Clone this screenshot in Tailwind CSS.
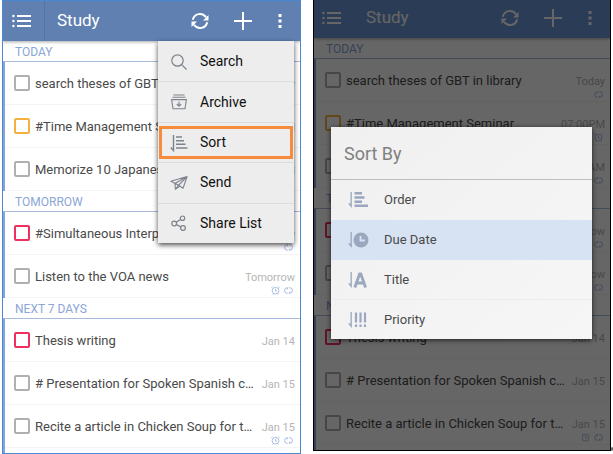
<!DOCTYPE html>
<html lang="en">
<head>
<meta charset="utf-8">
<title>Study</title>
<script src="https://cdn.jsdelivr.net/npm/@tailwindcss/browser@4"></script>
</head>
<body class="bg-white font-['Roboto',sans-serif] text-[#4a4a4a]">
<svg class="hidden" aria-hidden="true">
  <symbol id="i-list" viewBox="0 0 20 14"><g fill="currentColor"><circle cx="1.4" cy="2" r="1.2"/><circle cx="1.4" cy="7" r="1.2"/><circle cx="1.4" cy="12" r="1.2"/><rect x="5" y="1" width="14" height="2"/><rect x="5" y="6" width="14" height="2"/><rect x="5" y="11" width="14" height="2"/></g></symbol>
  <symbol id="i-sync" viewBox="0 0 18 18"><g fill="none" stroke="currentColor" stroke-width="2"><path d="M1.800 7.800A7.300 7.300 0 0 1 15 5.200"/><path d="M16.200 10.200A7.300 7.300 0 0 1 3 12.800"/></g><path fill="currentColor" d="M17.500 3v5.500H12zM.5 15V9.500H6z"/></symbol>
  <symbol id="i-plus" viewBox="0 0 18 18"><path d="M9 0v18M0 9h18" stroke="currentColor" stroke-width="2"/></symbol>
  <symbol id="i-dots" viewBox="0 0 4 16"><path fill="currentColor" d="M.5 1h3v3h-3zM.5 6.500h3v3h-3zM.5 12h3v3h-3z"/></symbol>
  <symbol id="i-search" viewBox="0 0 16 16"><g fill="none" stroke="currentColor" stroke-width="1.200"><circle cx="6.500" cy="6.500" r="5.700"/><path d="M10.700 10.700l4.800 4.800"/></g></symbol>
  <symbol id="i-archive" viewBox="0 0 16 16"><g fill="none" stroke="currentColor" stroke-width="1.100"><path d="M2.500 1h11M1.500 3.300h13M.6 5.600h14.800l-1.400 9.200H2zM8 7.500v4.500M5.800 10L8 12.300 10.200 10"/></g></symbol>
  <symbol id="i-sort" viewBox="0 0 18 18"><g fill="none" stroke="currentColor" stroke-width="1.400"><path d="M3.500 1v15.500L.8 13.500"/><path d="M6 3h6M6 6.700h8M6 10.300h9.500M6 14h11.500"/></g></symbol>
  <symbol id="i-send" viewBox="0 0 20 16"><g fill="none" stroke="currentColor" stroke-width="1.200" stroke-linejoin="round"><path d="M1 6L19 .8l-4.500 13-5-3.300zM19 .8L5.500 8.500 6 15 9.500 10.500zM6 15l5-3.500"/></g></symbol>
  <symbol id="i-share" viewBox="0 0 16 16"><g fill="none" stroke="currentColor" stroke-width="1.200"><circle cx="3.200" cy="8.500" r="2.400"/><circle cx="11.500" cy="3.200" r="2.200"/><circle cx="12" cy="13" r="2.400"/><path d="M5.200 7.200l4.400-2.800M5.400 9.500l4.400 2.400"/></g></symbol>
  <symbol id="i-alarm" viewBox="0 0 8 8"><g fill="none" stroke="currentColor" stroke-width=".8"><circle cx="4" cy="4.200" r="3"/><path d="M4 2.500v2h1.200M.5 1.500l1-1M7.500 1.500l-1-1M1.500 7.500l.8-.8M6.500 7.500l-.8-.8"/></g></symbol>
  <symbol id="i-repeat" viewBox="0 0 8 8"><g fill="none" stroke="currentColor" stroke-width=".8"><path d="M3.400 1.500H3a2.500 2.500 0 0 0 0 5h.4M4.600 6.500H5a2.500 2.500 0 0 0 0-5h-.4M2.500 3l1.200-1.500M5.500 5L4.300 6.500"/></g></symbol>
  <symbol id="i-order" viewBox="0 0 22 18"><path fill="currentColor" d="M3.500 1h1.300v16L1 12.500h2.500zM7.500 1h7.500v2.500H7.500zM7.500 5.200h10v2.500h-10zM7.500 9.400h7.500v2.500H7.500zM7.500 13.500h13.500V16H7.500z"/></symbol>
  <symbol id="i-due" viewBox="0 0 22 18"><path fill="currentColor" d="M3.500 1h1.300v16L1 12.500h2.500z"/><circle cx="14" cy="9" r="7.500" fill="currentColor"/><path d="M13.500 5v4.500h4.500" fill="none" stroke="#d7e2f2" stroke-width="1.800"/></symbol>
  <symbol id="i-title" viewBox="0 0 22 18"><path fill="currentColor" d="M3.500 1h1.300v16L1 12.500h2.500z"/><path d="M7.800 16.500L12.600 3h1.200l4.800 13.500M9.500 12h7.500" fill="none" stroke="currentColor" stroke-width="2.800"/></symbol>
  <symbol id="i-priority" viewBox="0 0 22 18"><path fill="currentColor" d="M3.500 1h1.300v16L1 12.500h2.500z"/><path d="M9 1.500v10M13.500 1.500v10M18 1.500v10M9 13.500v2.500M13.500 13.500v2.500M18 13.500v2.500" stroke="currentColor" stroke-width="2.200"/></symbol>
</svg>

<main class="flex items-start pl-[2px]">
  <section class="relative min-w-0 flex-[299] overflow-hidden border border-[#4a88d2]">
    <header class="flex h-10 items-center bg-[#5f80b1] pr-[18px] pl-[9px] text-white shadow-[0_1px_3px_rgba(0,0,0,0.35)]">
      <button aria-label="Lists" class="mr-3"><svg class="h-[14px] w-5"><use href="#i-list"/></svg></button>
      <div class="h-full w-px bg-[#56759f]"></div>
      <h1 class="ml-3 flex-1 text-[17px]">Study</h1>
      <button aria-label="Sync" class="mr-[25px]"><svg class="size-[18px]"><use href="#i-sync"/></svg></button>
      <button aria-label="Add task" class="mr-[26px]"><svg class="size-[18px]"><use href="#i-plus"/></svg></button>
      <button aria-label="More"><svg class="h-4 w-1"><use href="#i-dots"/></svg></button>
    </header>
    <div data-tasks="a"></div>
    <nav aria-label="List menu" class="absolute top-10 right-[6px] flex h-[202px] w-[136px] flex-col bg-[#ededed] pt-px text-[14px] text-[#111] shadow-[0_2px_5px_rgba(0,0,0,0.7)]">
      <button class="flex flex-1 items-center gap-3 border-b border-[#dcdcdc] pl-3"><svg class="h-4 w-[18px] text-[#7d838c]"><use href="#i-search"/></svg>Search</button>
      <button class="flex flex-1 items-center gap-3 border-b border-[#dcdcdc] pl-3"><svg class="h-4 w-[18px] text-[#7d838c]"><use href="#i-archive"/></svg>Archive</button>
      <button class="relative flex flex-1 items-center gap-3 border-b border-[#dcdcdc] pl-3"><svg class="size-[18px] text-[#7d838c]"><use href="#i-sort"/></svg>Sort<span class="absolute inset-x-px inset-y-[3px] border-3 border-[#f68b3c]"></span></button>
      <button class="flex flex-1 items-center gap-3 border-b border-[#dcdcdc] pl-3"><svg class="h-4 w-[18px] text-[#7d838c]"><use href="#i-send"/></svg>Send</button>
      <button class="flex flex-1 items-center gap-3 pl-3"><svg class="h-4 w-[18px] text-[#7d838c]"><use href="#i-share"/></svg>Share List</button>
    </nav>
  </section>

  <section class="relative ml-3 min-w-0 flex-[298] overflow-hidden border border-t-0 border-black">
    <header class="flex h-[38px] items-center bg-[#6c98d8] pr-[18px] pb-[2px] pl-2 text-white shadow-[0_1px_3px_rgba(0,0,0,0.35)]">
      <button aria-label="Lists" class="mr-6"><svg class="h-[14px] w-5"><use href="#i-list"/></svg></button>
      <h2 class="flex-1 text-[17px]">Study</h2>
      <button aria-label="Sync" class="mr-[25px]"><svg class="size-[18px]"><use href="#i-sync"/></svg></button>
      <button aria-label="Add task" class="mr-[26px]"><svg class="size-[18px]"><use href="#i-plus"/></svg></button>
      <button aria-label="More"><svg class="h-4 w-1"><use href="#i-dots"/></svg></button>
    </header>
    <div data-tasks="b"></div>
    <div class="absolute inset-0 bg-black/60"></div>
    <div role="dialog" aria-labelledby="sort-title" class="absolute top-[127px] right-[18px] left-[17px] bg-linear-to-br from-[#f0f0f0] to-[#f6f6f6] text-[13px] shadow-[0_1px_5px_rgba(0,0,0,0.7)]">
      <h3 id="sort-title" class="flex h-[53px] items-center border-b border-[#bdbdbd] px-[13px] text-[18px] text-[#808080]">Sort By</h3>
      <button class="flex h-10 w-full items-center gap-[15px] pl-4"><svg class="h-[18px] w-[22px] text-[#9aa7bf]"><use href="#i-order"/></svg>Order</button>
      <button class="flex h-10 w-full items-center gap-[15px] bg-[#d7e2f2] pl-4"><svg class="h-[18px] w-[22px] text-[#9aa7bf]"><use href="#i-due"/></svg>Due Date</button>
      <button class="flex h-10 w-full items-center gap-[15px] border-b border-[#ececec] pl-4"><svg class="h-[18px] w-[22px] text-[#9aa7bf]"><use href="#i-title"/></svg>Title</button>
      <button class="flex h-[39px] w-full items-center gap-[15px] pl-4"><svg class="h-[18px] w-[22px] text-[#9aa7bf]"><use href="#i-priority"/></svg>Priority</button>
    </div>
  </section>
  <svg class="mb-[3px] h-[4px] w-[2px] shrink-0 self-end" viewBox="0 0 2 4" aria-hidden="true"><path d="M0 2h2M1 0v4" stroke="#444"/></svg>
</main>

<script>
const groups = [
  ["TODAY", [
    ["search theses of GBT in library", "Today", "gray", ["repeat"]],
    ["#Time Management Seminar", "07:00PM", "amber", ["alarm"]],
    ["Memorize 10 Japanese words", "08:00AM", "gray", ["alarm", "repeat"]]]],
  ["TOMORROW", [
    ["#Simultaneous Interpretation", "Tomorrow", "red", ["repeat"]],
    ["Listen to the VOA news", "Tomorrow", "gray", ["alarm", "repeat"]]]],
  ["NEXT 7 DAYS", [
    ["Thesis writing", "Jan 14", "red", []],
    ["# Presentation for Spoken Spanish c…", "Jan 15", "gray", []],
    ["Recite a article in Chicken Soup for t…", "Jan 15", "gray", ["alarm", "repeat"]]]]
];
const boxBorder = { gray: "border-[#b0b0b0]", amber: "border-[#f2b140]", red: "border-[#f0305c]" };
document.querySelectorAll("[data-tasks]").forEach(root => {
  root.innerHTML = groups.map(([name, tasks], g) => `
    <h4 class="flex h-[21px] items-center border-b border-[#a9bbdc] pt-[2px] pl-3 text-[12px] text-[#8ba6d6]">${name}</h4>
    <ul class="border-l-2 border-[#85a3dd] ${g === 2 ? "pb-[5px]" : ""}">${tasks.map(([title, date, color, marks], i) => {
      const id = root.dataset.tasks + g + i;
      return `<li class="flex h-[43px] items-center border-b border-[#f4f4f4] pr-[5px] pl-[9px]">
        <input type="checkbox" id="${id}" class="size-4 shrink-0 appearance-none rounded-[2px] border-2 ${boxBorder[color]}">
        <label for="${id}" class="min-w-0 flex-1 overflow-hidden pt-[2px] pl-[5px] text-[13px] whitespace-nowrap">${title}</label>
        <div class="flex h-full shrink-0 flex-col items-end pt-[15px] text-[11px] leading-4 text-[#b5b5b5]">${date}
          <span class="flex gap-1 pr-[2px] text-[#9db4df]">${marks.map(m => `<svg class="size-[9px]"><use href="#i-${m}"/></svg>`).join("")}</span>
        </div></li>`;
    }).join("")}</ul>`).join("");
});
</script>
</body>
</html>
